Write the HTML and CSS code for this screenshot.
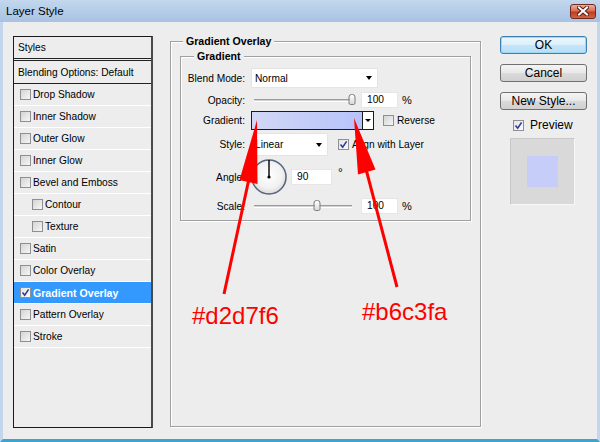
FILE: index.html
```html
<!DOCTYPE html>
<html>
    <head>
        <meta charset="UTF-8">
        <title>Layer Style</title>
        <meta name="viewport" content="width=device-width, initial-scale=1.0">
        <link rel="stylesheet" href="styles.css">
    </head>
    <body>
        <div class="window">
            <div class="titlebar">
                <span class="title">Layer Style</span>
                <button class="close">
                    <svg width="12" height="10" viewBox="0 0 12 10">
                        <path d="M2 1.5 L10 8.5 M10 1.5 L2 8.5" stroke="#5b1c12" stroke-width="4" stroke-linecap="square"/>
                        <path d="M2 1.5 L10 8.5 M10 1.5 L2 8.5" stroke="#fff" stroke-width="2" stroke-linecap="square"/>
                    </svg>
                </button>
            </div>

            <div class="content">
                <!-- Styles list -->
                <ul class="styles">
                    <li class="head">Styles</li>
                    <li class="blending">Blending Options: Default</li>
                    <li><span class="check"></span>Drop Shadow</li>
                    <li><span class="check"></span>Inner Shadow</li>
                    <li><span class="check"></span>Outer Glow</li>
                    <li><span class="check"></span>Inner Glow</li>
                    <li><span class="check"></span>Bevel and Emboss</li>
                    <li class="sub"><span class="check"></span>Contour</li>
                    <li class="sub"><span class="check"></span>Texture</li>
                    <li><span class="check"></span>Satin</li>
                    <li><span class="check"></span>Color Overlay</li>
                    <li class="selected"><span class="check on"><svg viewBox="0 0 9 9"><path d="M1.5 4.5 L3.7 7.2 L7.6 1.4"/></svg></span>Gradient Overlay</li>
                    <li><span class="check"></span>Pattern Overlay</li>
                    <li><span class="check"></span>Stroke</li>
                </ul>

                <!-- Gradient overlay settings -->
                <div class="group overlay">
                    <div class="group-title">Gradient Overlay</div>
                    <div class="group inner">
                        <div class="group-title">Gradient</div>
                        <div class="rows">
                            <div class="row r-blend">
                                <span class="label">Blend Mode:</span>
                                <div class="select select-blend"><span>Normal</span><i class="caret"></i></div>
                            </div>
                            <div class="row r-opacity">
                                <span class="label">Opacity:</span>
                                <div class="slider"><span class="thumb" style="left: 100%"></span></div>
                                <span class="field">100</span><span class="unit">%</span>
                            </div>
                            <div class="row r-gradient">
                                <span class="label">Gradient:</span>
                                <div class="picker">
                                    <span class="swatch"></span>
                                    <span class="drop"><i class="caret small"></i></span>
                                </div>
                                <span class="opt opt-reverse"><span class="check"></span>Reverse</span>
                            </div>
                            <div class="row r-style">
                                <span class="label">Style:</span>
                                <div class="select select-style"><span>Linear</span><i class="caret"></i></div>
                                <span class="opt"><span class="check on"><svg viewBox="0 0 9 9"><path d="M1.5 4.5 L3.7 7.2 L7.6 1.4"/></svg></span>Align with Layer</span>
                            </div>
                            <div class="row r-angle">
                                <span class="label">Angle:</span>
                                <svg class="dial" width="36" height="36" viewBox="0 0 36 36">
                                    <defs>
                                        <radialGradient id="dialFill" cx="50%" cy="45%" r="55%">
                                            <stop offset="0" stop-color="#ffffff"/>
                                            <stop offset="0.7" stop-color="#f1f1f1"/>
                                            <stop offset="1" stop-color="#d9d9d9"/>
                                        </radialGradient>
                                    </defs>
                                    <circle cx="18" cy="18" r="17" fill="url(#dialFill)" stroke="#55647f" stroke-width="1.5"/>
                                    <line x1="18" y1="18" x2="18" y2="1" stroke="#000" stroke-width="1.4"/>
                                    <circle cx="18" cy="18" r="1.6" fill="#000"/>
                                </svg>
                                <span class="field field-angle">90</span><span class="degree">°</span>
                            </div>
                            <div class="row r-scale">
                                <span class="label">Scale:</span>
                                <div class="slider"><span class="thumb" style="left: 64%"></span></div>
                                <span class="field">100</span><span class="unit">%</span>
                            </div>
                        </div>
                    </div>
                </div>

                <!-- Dialog buttons and preview -->
                <div class="side">
                    <button class="btn default">OK</button>
                    <button class="btn">Cancel</button>
                    <button class="btn">New Style...</button>
                    <span class="preview-toggle"><span class="check on"><svg viewBox="0 0 9 9"><path d="M1.5 4.5 L3.7 7.2 L7.6 1.4"/></svg></span>Preview</span>
                    <div class="preview"><span class="preview-swatch"></span></div>
                </div>
            </div>

            <!-- Colour annotations drawn over the dialog -->
            <svg class="marks" width="600" height="442" viewBox="0 0 600 442">
                <polygon points="257,120 257.5,184 239.5,180" fill="#ff0000"/>
                <line x1="248.5" y1="181" x2="224" y2="294" stroke="#ff0000" stroke-width="3"/>
                <polygon points="354,118 375.5,169.5 358,174.5" fill="#ff0000"/>
                <line x1="366.5" y1="171" x2="397" y2="287" stroke="#ff0000" stroke-width="3"/>
            </svg>
            <span class="hex hex-start">#d2d7f6</span>
            <span class="hex hex-end">#b6c3fa</span>
        </div>
    </body>
</html>
```

FILE: styles.css
```css
*
{
    box-sizing: border-box;
}
body
{
    margin: 0;
    font-family: "Liberation Sans", Arial, sans-serif;
    font-size: 10.2px;
    color: #000;
}

.window
{
    position: relative;
    width: 600px;
    height: 442px;
    display: flex;
    flex-direction: column;
    background: #ededed;
    overflow: hidden;
}

.titlebar
{
    height: 22px;
    flex: none;
    display: flex;
    align-items: center;
    justify-content: space-between;
    padding: 0 4px 0 6px;
    background: linear-gradient(to bottom, #c3d7ee, #a8c2e2);
}
.titlebar .title { font-size: 11.5px; }
.close
{
    width: 26px;
    height: 15px;
    padding: 0;
    display: flex;
    align-items: center;
    justify-content: center;
    border: 1px solid #6e2a1e;
    border-radius: 3px;
    background: linear-gradient(to bottom, #eab0a2, #d86a52 48%, #c23b1f 52%, #cf6445);
}

.content
{
    flex: 1;
    display: flex;
    padding: 14px 10px 11px 10px;
    border: 3px solid #c3d6ec;
    border-top: none;
    border-bottom-color: #3aa6d0;
}

/* Styles list */
.styles
{
    width: 140px;
    flex: none;
    margin: 0;
    padding: 0;
    list-style: none;
    border: 1px solid #1a1a1a;
    border-right: 2px solid #4a4a4a;
}
.styles li
{
    height: 22px;
    display: flex;
    align-items: center;
    padding-left: 6px;
    border-bottom: 1px solid #fff;
}
.styles li .check { margin-right: 2px; }
.styles li.head
{
    height: 24px;
    padding-left: 4px;
    border-bottom: 3px double #222;
}
.styles li.blending
{
    height: 23px;
    padding-left: 4px;
    border-bottom: 1px solid #222;
}
.styles li.sub { padding-left: 18px; }
.styles li.selected
{
    background: #3399ff;
    color: #fff;
    font-weight: bold;
    font-size: 10.6px;
}

/* Checkboxes */
.check
{
    width: 11px;
    height: 11px;
    flex: none;
    display: flex;
    align-items: center;
    justify-content: center;
    border: 1px solid #8e8f8f;
    background: linear-gradient(135deg, #d4d4d4, #f6f6f6);
}
.check.on { background: linear-gradient(135deg, #e4e4e4, #fbfbfb); }
.check svg { width: 9px; height: 9px; }
.check path
{
    fill: none;
    stroke: #2b3b9c;
    stroke-width: 1.6;
}

/* Etched group boxes */
.group
{
    display: flex;
    flex-direction: column;
    border: 1px solid #a0a0a0;
    box-shadow: inset 1px 1px 0 #fff, 1px 1px 0 #fff;
}
.group-title
{
    width: fit-content;
    height: 14px;
    line-height: 14px;
    margin-top: -8px;
    padding: 0 3px;
    background: #ededed;
    font-weight: bold;
    font-size: 10.6px;
}
.overlay
{
    width: 311px;
    flex: none;
    margin: 5px 0 1px 17px;
}
.overlay > .group-title { margin-left: 12px; }
.inner { margin: 8px 9px 0 9px; }
.inner > .group-title { margin-left: 13px; }

.rows { padding: 3px 0 4px; }
.row
{
    display: flex;
    align-items: center;
}
.r-blend { height: 24px; }
.r-opacity { height: 20px; }
.r-gradient { height: 21px; }
.r-style { height: 27px; }
.r-angle { height: 38px; }
.r-scale { height: 20px; }
.label
{
    width: 64px;
    margin-right: 6px;
    text-align: right;
}

.select
{
    display: flex;
    align-items: center;
    justify-content: space-between;
    padding: 0 5px 0 3px;
    background: #fff;
    border: 1px solid #e4e4e4;
}
.select-blend { width: 127px; height: 20px; }
.select-style { width: 77px; height: 23px; }
.caret
{
    width: 0;
    height: 0;
    border-left: 3.5px solid transparent;
    border-right: 3.5px solid transparent;
    border-top: 4px solid #000;
}
.caret.small
{
    border-left-width: 3px;
    border-right-width: 3px;
    border-top-width: 3px;
}

.slider
{
    position: relative;
    width: 98px;
    height: 3px;
    margin: 0 9px 0 3px;
    border-top: 1px solid #9c9c9c;
    border-bottom: 1px solid #fff;
    background: #d2d2d2;
}
.thumb
{
    position: absolute;
    top: -6px;
    width: 7px;
    height: 11px;
    transform: translateX(-50%);
    border: 1px solid #7d7d7d;
    border-radius: 3px 3px 2px 2px;
    background: linear-gradient(to bottom, #ffffff, #d9d9d9);
}

.field
{
    width: 37px;
    height: 16px;
    line-height: 14px;
    padding-left: 5px;
    background: #fff;
    border: 1px solid #e6e6e6;
}
.field-angle { width: 41px; margin-left: 4px; }
.unit { margin-left: 4px; font-size: 11px; }
.degree
{
    margin: 0 0 8px 6px;
    line-height: 12px;
    font-size: 12px;
}

.picker
{
    display: flex;
    height: 19px;
}
.swatch
{
    width: 111px;
    border: 1px solid #1a1a1a;
    border-right: none;
    background: linear-gradient(to right, #d2d7f6, #b6c3fa);
}
.drop
{
    width: 12px;
    display: flex;
    align-items: center;
    justify-content: center;
    border: 1px solid #1a1a1a;
    background: #fff;
}
.opt
{
    display: flex;
    align-items: center;
    margin-left: 10px;
}
.opt-reverse { margin-left: 9px; }
.opt .check { margin-right: 3px; }

/* Right column */
.side
{
    width: 87px;
    flex: none;
    margin-left: 19px;
    display: flex;
    flex-direction: column;
}
.btn
{
    height: 18px;
    margin: 0 0 10px;
    padding: 0;
    font-family: "Liberation Sans", Arial, sans-serif;
    font-size: 12px;
    color: #000;
    border: 1px solid #707070;
    border-radius: 3px;
    background: linear-gradient(to bottom, #f4f4f4, #e8e8e8 50%, #dadada 51%, #d0d0d0);
}
.btn.default
{
    border-color: #3c7fb1;
    box-shadow: inset 0 0 0 1px #9fd8f5;
    background: linear-gradient(to bottom, #ecf6fc, #dcf0fb 50%, #c5e6f9 51%, #b6def6);
}
.preview-toggle
{
    height: 14px;
    margin: -2px 0 0 13px;
    display: flex;
    align-items: center;
    font-size: 12px;
}
.preview-toggle .check { margin-right: 6px; }
.preview
{
    width: 65px;
    height: 67px;
    margin: 6px 0 0 10px;
    display: flex;
    align-items: center;
    justify-content: center;
    background: #d9d9d9;
    border: 1px solid #f7f7f7;
    border-top-color: #c8c8c8;
    border-left-color: #c8c8c8;
}
.preview-swatch
{
    width: 31px;
    height: 31px;
    background: #c6cdf8;
}

/* Annotations */
.marks
{
    position: absolute;
    top: 0;
    left: 0;
    pointer-events: none;
}
.hex
{
    position: absolute;
    line-height: 24px;
    font-size: 24px;
    color: #ff0000;
}
.hex-start { left: 192px; top: 304px; }
.hex-end { left: 362px; top: 300px; }
```
